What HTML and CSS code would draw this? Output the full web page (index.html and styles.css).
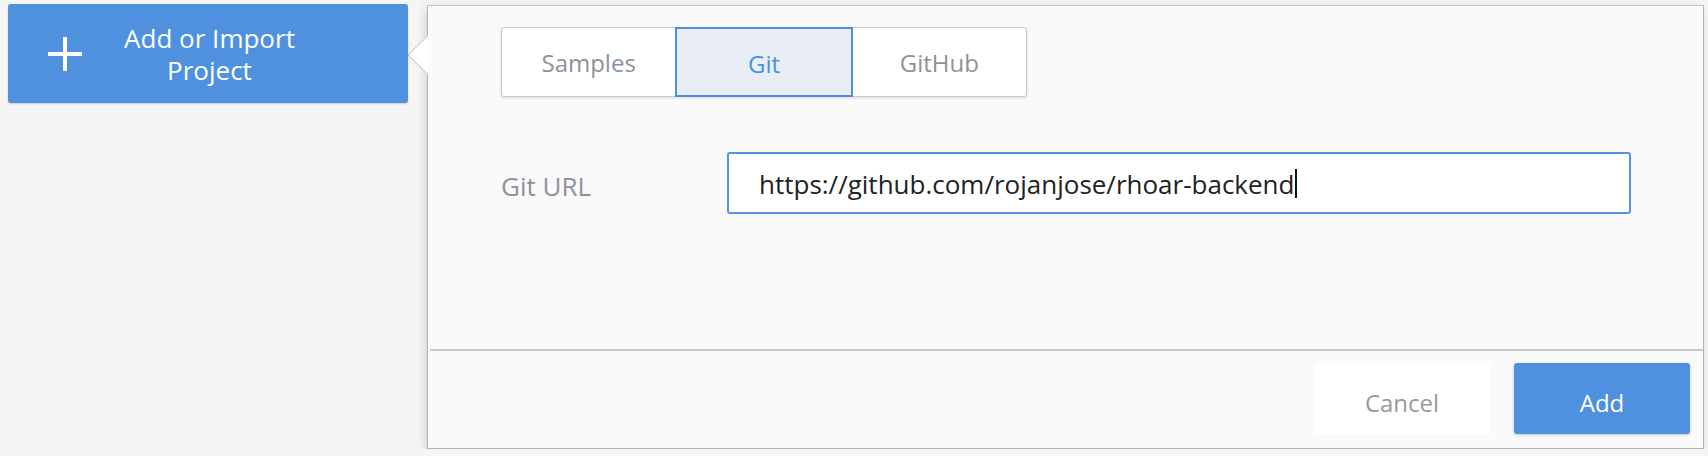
FILE: index.html
```html
<!DOCTYPE html>
<html lang="en">
<head>
<meta charset="utf-8">
<title>Add or Import Project</title>
<link rel="stylesheet" href="styles.css">
</head>
<body>
<div class="page">
  <button class="import-btn" type="button">
    <svg class="plus" viewBox="0 0 34 34" width="34" height="34" aria-hidden="true">
      <rect x="15" y="0" width="4" height="34" fill="#fff"/>
      <rect x="0" y="15" width="34" height="4" fill="#fff"/>
    </svg>
    <span class="import-label"><span class="line">Add or Import</span><span class="line">Project</span></span>
  </button>

  <div class="popover">
    <svg class="arrow" viewBox="0 0 21 40" width="21" height="40" aria-hidden="true">
      <polygon points="21,0 1,20 21,40" fill="#fff"/>
      <polyline points="21,0.5 1,20 21,39.5" fill="none" stroke="#b9b9b9" stroke-width="1"/>
    </svg>
    <div class="popover-body">
      <div class="tabs">
        <div class="tab">Samples</div>
        <div class="tab active">Git</div>
        <div class="tab">GitHub</div>
      </div>
      <div class="form-row">
        <div class="form-label">Git URL</div>
        <div class="text-input"><span class="value">https://github.com/rojanjose/rhoar-backend</span><span class="caret"></span></div>
      </div>
    </div>
    <div class="separator"></div>
    <div class="footer">
      <button class="btn btn-cancel" type="button">Cancel</button>
      <button class="btn btn-add" type="button">Add</button>
    </div>
  </div>
</div>
</body>
</html>
```

FILE: styles.css
```css
* { box-sizing: border-box; }

html, body {
  margin: 0;
  padding: 0;
  background: #f5f5f5;
  font-family: "Open Sans", "Noto Sans", sans-serif;
}

.page {
  display: flex;
  align-items: flex-start;
  padding: 4px 0 0 8px;
}

.import-btn {
  display: flex;
  align-items: center;
  width: 400px;
  height: 99px;
  padding: 1px 71px 0 40px;
  border: none;
  border-radius: 3px;
  background: #4f91de;
  color: #fff;
  font-family: inherit;
  font-size: 26px;
  box-shadow: 0 1px 2px rgba(0, 0, 0, 0.18);
  cursor: pointer;
}

.plus { flex: none; display: block; }

.import-label {
  flex: 1;
  display: flex;
  flex-direction: column;
  align-items: center;
}

.line {
  display: block;
  height: 32px;
  line-height: 32px;
}

.popover {
  position: relative;
  margin: 1px 0 0 19px;
  width: 1277px;
  height: 444px;
  background: #fafafa;
  border: 1px solid #b3b3b3;
  border-top-color: #c4c4c4;
  box-shadow: -2px 3px 9px rgba(0, 0, 0, 0.14);
  display: flex;
  flex-direction: column;
}

.arrow {
  position: absolute;
  left: -21px;
  top: 29px;
  display: block;
}

.popover-body {
  flex: 1;
  padding: 21px 0 0 73px;
}

.tabs {
  display: flex;
  width: 526px;
  height: 70px;
  border: 1px solid #c9c9c9;
  border-radius: 3px;
  background: #fff;
  box-shadow: 0 1px 3px rgba(0, 0, 0, 0.13);
}

.tab {
  flex: 1;
  display: flex;
  align-items: center;
  justify-content: center;
  font-size: 24px;
  color: #8d929a;
  padding-top: 0;
}

.tab.active {
  margin: -1px 0;
  border: 2px solid #4a90e2;
  background: #e9eef6;
  color: #4a90e2;
  padding-top: 3px;
}

.form-row {
  display: flex;
  align-items: center;
  margin-top: 55px;
}

.form-label {
  width: 226px;
  font-size: 26px;
  color: #8d929a;
  padding-top: 6px;
}

.text-input {
  display: flex;
  align-items: center;
  width: 904px;
  height: 62px;
  padding: 2px 0 0 30px;
  background: #fff;
  border: 2px solid #5493e0;
  border-radius: 3px;
  font-size: 26px;
  color: #222;
}

.caret {
  display: inline-block;
  width: 2px;
  height: 29px;
  background: #111;
  margin-left: 1px;
  margin-top: -2px;
}

.separator {
  height: 2px;
  margin: 0 0 0 2px;
  background: #c9c9c9;
}

.footer {
  display: flex;
  justify-content: flex-end;
  gap: 24px;
  padding: 12px 13px 14px 0;
}

.btn {
  width: 176px;
  height: 71px;
  border: none;
  border-radius: 3px;
  font-family: inherit;
  font-size: 24px;
  padding-top: 9px;
  cursor: pointer;
}

.btn-cancel {
  background: #fff;
  color: #999;
}

.btn-add {
  background: #4f91de;
  color: #fff;
  box-shadow: 0 1px 3px rgba(0, 0, 0, 0.22);
}
```
